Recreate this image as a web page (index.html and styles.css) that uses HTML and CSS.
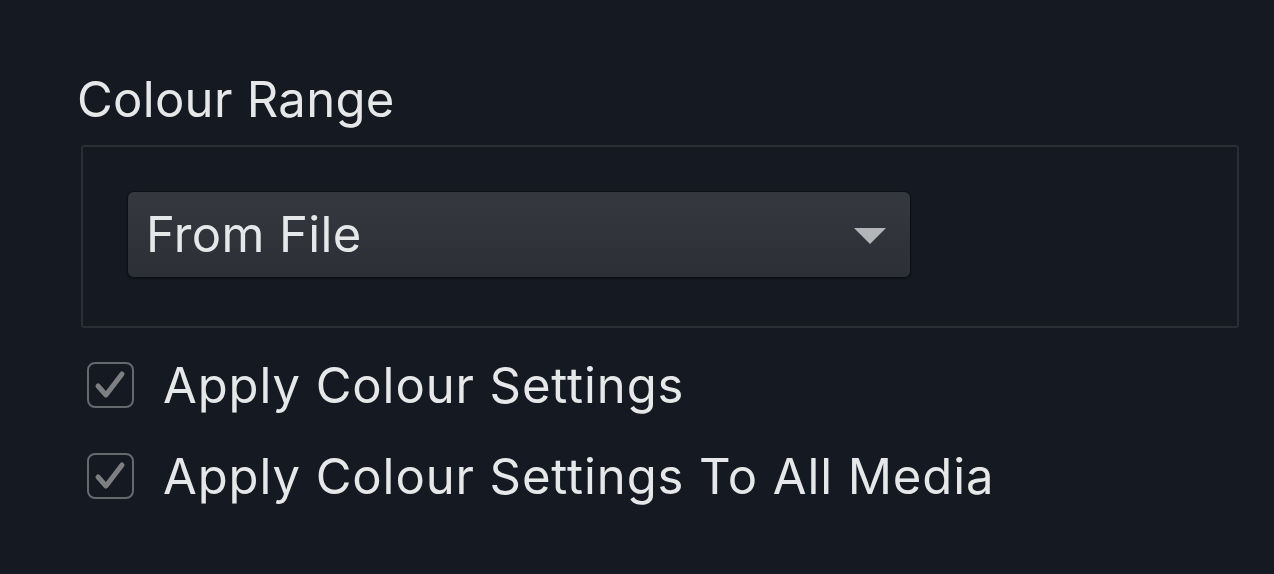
FILE: index.html
```html
<!DOCTYPE html>
<html>
<head>
<meta charset="utf-8">
<link rel="stylesheet" href="styles.css">
</head>
<body>
<div class="panel">
  <div class="title">Colour Range</div>
  <div class="group">
    <div class="select">
      <span class="select-label">From File</span>
      <svg class="caret" width="32" height="16" viewBox="0 0 32 16"><path d="M0 0 H32 L16 16 Z" fill="#b3b5b8"/></svg>
    </div>
  </div>
  <div class="checks">
    <div class="check-row">
      <span class="check">
        <svg width="47" height="46" viewBox="0 0 47 46"><rect x="1" y="1" width="45" height="44" rx="7" fill="none" stroke="#65686d" stroke-width="2"/><path d="M11 24 L19 33 L35 12" fill="none" stroke="#7d7f83" stroke-width="5" stroke-linecap="round" stroke-linejoin="round"/></svg>
      </span>
      <span class="check-label">Apply Colour Settings</span>
    </div>
    <div class="check-row">
      <span class="check">
        <svg width="47" height="46" viewBox="0 0 47 46"><rect x="1" y="1" width="45" height="44" rx="7" fill="none" stroke="#65686d" stroke-width="2"/><path d="M11 24 L19 33 L35 12" fill="none" stroke="#7d7f83" stroke-width="5" stroke-linecap="round" stroke-linejoin="round"/></svg>
      </span>
      <span class="check-label">Apply Colour Settings To All Media</span>
    </div>
  </div>
</div>
</body>
</html>
```
FILE: styles.css
```css
html, body {
  margin: 0;
  padding: 0;
  background: #151a22;
  height: 100%;
}
body {
  font-family: Inter, "Liberation Sans", sans-serif;
  color: #e6e7e8;
}
.panel {
  padding: 70px 0 0 77px;
  display: flex;
  flex-direction: column;
}
.title {
  font-size: 49px;
  line-height: 60px;
  height: 60px;
  letter-spacing: 0.3px;
}
.group {
  margin-top: 15px;
  margin-left: 4px;
  box-sizing: border-box;
  width: 1158px;
  height: 183px;
  border: 2px solid #2a2e35;
  border-radius: 3px;
  padding: 44px 0 0 44px;
}
.select {
  width: 784px;
  height: 87px;
  box-sizing: border-box;
  border-radius: 7px;
  background: linear-gradient(#35393f, #2c3036);
  border: 1px solid #0d1014;
  box-shadow: 0 1px 2px rgba(0,0,0,0.5);
  display: flex;
  align-items: center;
  padding: 0 24px 0 18px;
  justify-content: space-between;
}
.select-label {
  font-size: 49px;
  line-height: 60px;
  letter-spacing: 0.35px;
}
.caret {
  margin-top: 2px;
}
.checks {
  margin-top: 11px;
  margin-left: 10px;
  display: flex;
  flex-direction: column;
}
.check-row {
  display: flex;
  align-items: center;
  height: 91px;
}
.check {
  display: flex;
  width: 47px;
  height: 46px;
}
.check-label {
  margin-left: 29px;
  margin-top: 3px;
  font-size: 49px;
  line-height: 60px;
  letter-spacing: 0.9px;
}
```
